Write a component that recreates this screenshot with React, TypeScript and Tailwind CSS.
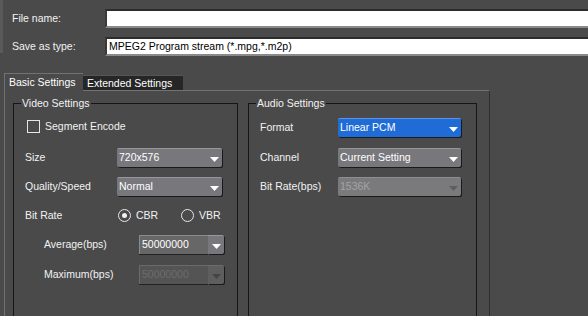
import React from "react";

const Arrow = ({ color = "#ffffff" }: { color?: string }) => (
  <svg width="9" height="5" viewBox="0 0 9 5" className="shrink-0">
    <polygon points="0,0 9,0 4.5,5" fill={color} />
  </svg>
);

const Dropdown = ({
  text,
  width,
  variant = "normal",
}: {
  text: string;
  width: string;
  variant?: "normal" | "blue" | "disabled";
}) => {
  const base =
    variant === "blue"
      ? "bg-[#1f6cd6] border-t border-[#5b96e6] text-white"
      : variant === "disabled"
      ? "bg-[#7a7a7c] border-t border-[#8e8e90] text-[#a2a2a4]"
      : "bg-[#77777c] border-t border-[#98989c] text-white";
  return (
    <div
      className={`${width} ${base} h-[19px] rounded-[2px] shadow-[1px_1px_0_#1a1a1a] flex items-center pl-[2px] pr-[3px]`}
    >
      <span className="flex-1 whitespace-nowrap leading-[13px]">{text}</span>
      <span className="mt-[3px]">
        <Arrow color={variant === "disabled" ? "#5e5e60" : "#ffffff"} />
      </span>
    </div>
  );
};

const SpinBox = ({ text, disabled = false }: { text: string; disabled?: boolean }) => (
  <div className="flex h-[19px]">
    <div
      className={`w-[69px] h-[19px] flex items-center pl-[2px] border-t border-l ${
        disabled
          ? "bg-[#545454] border-[#6a6a6a] text-[#6c6c6c]"
          : "bg-[#676767] border-[#8a8a8a] text-white"
      } shadow-[0_1px_0_#222]`}
    >
      <span className="leading-[13px]">{text}</span>
    </div>
    <div
      className={`w-[16px] h-[19px] flex items-center justify-center rounded-r-[2px] border-t ${
        disabled ? "bg-[#5e5e5e] border-[#6c6c6c]" : "bg-[#77777c] border-[#98989c]"
      } shadow-[1px_1px_0_#1a1a1a]`}
    >
      <span className="mt-[3px]">
        <Arrow color={disabled ? "#454545" : "#ffffff"} />
      </span>
    </div>
  </div>
);

const Radio = ({ checked }: { checked: boolean }) => (
  <span className="w-[13px] h-[13px] rounded-full border-[1.5px] border-[#e8e8e8] flex items-center justify-center shrink-0">
    {checked && <span className="w-[5px] h-[5px] rounded-full bg-[#f0f0f0]" />}
  </span>
);

export default function App() {
  return (
    <div className="w-[588px] h-[316px] bg-[#4a4a4a] overflow-hidden font-['Liberation_Sans',Arial,sans-serif] text-[10.5px] leading-[13px] text-[#f2f2f2]">
      {/* Top file area */}
      <div className="flex h-[56px]">
        <div className="w-[3px] h-[53px] bg-[#5a5a5a] shrink-0" />
        <div className="flex-1 flex flex-col pt-[9px] gap-[9px]">
          <div className="flex items-center h-[19px]">
            <span className="w-[102px] pl-[9px]">File name:</span>
            <div className="flex-1 h-[19px] bg-white border-t-2 border-l-2 border-t-[#2c2c2c] border-l-[#3a3a3a] border-b-2 border-b-[#8a8a8a]" />
          </div>
          <div className="flex items-center h-[19px]">
            <span className="w-[102px] pl-[9px]">Save as type:</span>
            <div className="flex-1 h-[19px] bg-white border-t-2 border-l-2 border-t-[#2c2c2c] border-l-[#3a3a3a] border-b-2 border-b-[#8a8a8a] flex items-center pl-[2px] text-black">
              MPEG2 Program stream (*.mpg,*.m2p)
            </div>
          </div>
        </div>
      </div>

      {/* Tabs */}
      <div className="mt-[17px] ml-[4px] w-[486px] flex items-end h-[18px]">
        <div className="w-[79px] h-[18px] border-t border-l border-[#727272] flex items-center pl-[4px] text-white">
          Basic Settings
        </div>
        <div className="w-[100px] h-[16px] bg-[#262626] border-t border-[#555] border-b border-b-[#727272] flex items-center pl-[4px] text-white">
          Extended Settings
        </div>
        <div className="flex-1 border-b border-[#727272] border-r border-r-[#2e2e2e]" />
      </div>

      {/* Panel */}
      <div className="ml-[4px] w-[486px] h-[230px] border-l border-[#727272] border-r border-r-[#2e2e2e] pl-[8px] pt-[6px] flex gap-[10px]">
        {/* Video Settings */}
        <fieldset className="w-[225px] h-[240px] border border-[#161616] shrink-0">
          <legend className="ml-[7px] px-[1px] leading-[13px]">Video Settings</legend>
          <div className="pl-[11px]">
            <div className="h-[20px] mt-[6px] flex items-center ml-[2px]">
              <span className="w-[13px] h-[13px] border border-[#e6e6e6] shrink-0" />
              <span className="ml-[5px]">Segment Encode</span>
            </div>
            <div className="h-[20px] mt-[11px] flex items-center">
              <span className="w-[92px]">Size</span>
              <Dropdown text="720x576" width="w-[105px]" />
            </div>
            <div className="h-[20px] mt-[9px] flex items-center">
              <span className="w-[92px]">Quality/Speed</span>
              <Dropdown text="Normal" width="w-[105px]" />
            </div>
            <div className="h-[20px] mt-[9px] flex items-center">
              <span className="w-[93px]">Bit Rate</span>
              <Radio checked />
              <span className="ml-[5px] w-[45px]">CBR</span>
              <Radio checked={false} />
              <span className="ml-[5px]">VBR</span>
            </div>
            <div className="h-[20px] mt-[9px] flex items-center">
              <span className="w-[114px] pl-[19px]">Average(bps)</span>
              <SpinBox text="50000000" />
            </div>
            <div className="h-[20px] mt-[10px] flex items-center">
              <span className="w-[114px] pl-[19px]">Maximum(bps)</span>
              <SpinBox text="50000000" disabled />
            </div>
          </div>
        </fieldset>

        {/* Audio Settings */}
        <fieldset className="w-[229px] h-[240px] border border-[#161616] shrink-0">
          <legend className="ml-[7px] px-[1px] leading-[13px]">Audio Settings</legend>
          <div className="pl-[11px]">
            <div className="h-[20px] mt-[7px] flex items-center">
              <span className="w-[78px]">Format</span>
              <Dropdown text="Linear PCM" width="w-[123px]" variant="blue" />
            </div>
            <div className="h-[20px] mt-[10px] flex items-center">
              <span className="w-[78px]">Channel</span>
              <Dropdown text="Current Setting" width="w-[123px]" />
            </div>
            <div className="h-[20px] mt-[9px] flex items-center">
              <span className="w-[78px]">Bit Rate(bps)</span>
              <Dropdown text="1536K" width="w-[123px]" variant="disabled" />
            </div>
          </div>
        </fieldset>
      </div>
    </div>
  );
}
